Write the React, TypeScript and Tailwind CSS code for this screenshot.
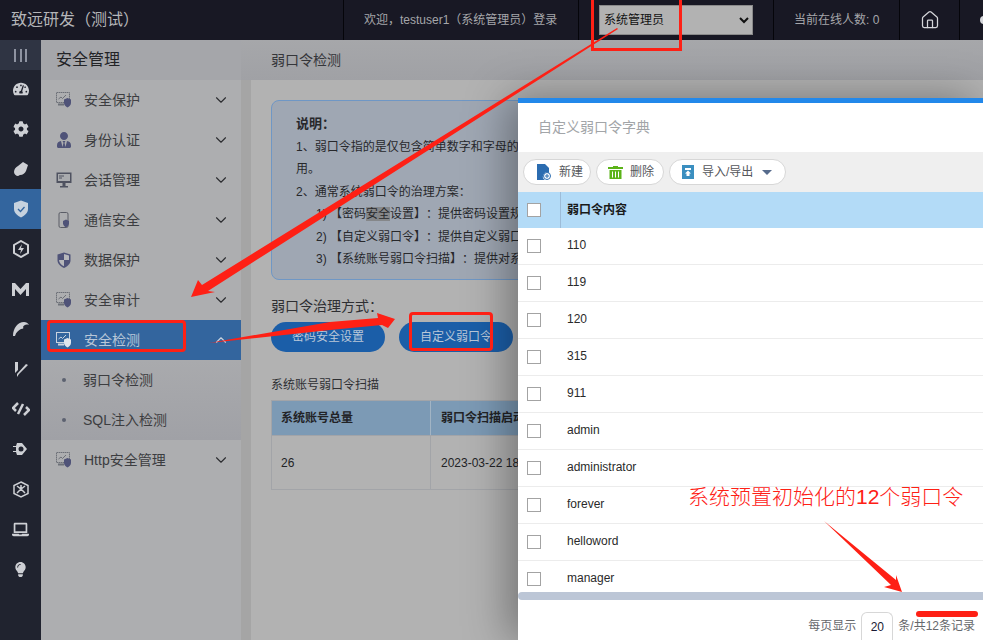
// App.tsx
import { ChevronDown, ChevronUp, Home } from "lucide-react";
import { FaCog, FaLaptop, FaLightbulb, FaTachometerAlt, FaUserTie } from "react-icons/fa";

const font = "font-['Liberation_Sans','Noto_Sans_CJK_SC',sans-serif]";

const passwords = ["110", "119", "120", "315", "911", "admin", "administrator", "forever", "helloword", "manager"];

function ScreenShield({ light = false }: { light?: boolean }) {
	const c = light ? "#c9d3df" : "#6d7178";
	return (
		<svg width="16" height="16" viewBox="0 0 16 16">
			<rect x="0.5" y="0.5" width="13" height="10" fill="none" stroke={c} strokeDasharray={light ? undefined : "1.5 0.5"} />
			<path d="M2.5 7l2.5-2 1.5 1.5L10 3" fill="none" stroke={c} />
			<rect x="2" y="11.5" width="6" height="2" fill={c} />
			<path d="M8 7.5l3.5-1.5L15 7.5v3.5c0 2-2 3.700-3.500 4.500C10 14.700 8 13 8 11z" fill={light ? "#dfe5ec" : "#4f5378"} />
		</svg>
	);
}

function Monitor() {
	return (
		<svg width="16" height="16" viewBox="0 0 16 16">
			<rect x="0.5" y="0.500" width="15" height="10.500" fill="#4f5260" />
			<rect x="2" y="2" width="12" height="7" fill="#a9abae" />
			<path d="M3 4h5M3 6h3" stroke="#4f5260" />
			<rect x="6.500" y="11" width="3" height="3" fill="#4f5260" />
			<rect x="4" y="14" width="8" height="1.500" fill="#4f5260" />
		</svg>
	);
}

function HalfShield() {
	return (
		<svg width="16" height="16" viewBox="0 0 16 16">
			<path d="M8 0.500l6.500 2v6c0 3.500-3.500 6-6.500 7.500C5 14.500 1.500 12 1.500 8.500v-6z" fill="#4f5378" />
			<path d="M8 2l5 1.500V8H8zM8 8v6.200C5.500 13 3 11 3 8z" fill="#b6b7ba" />
		</svg>
	);
}

function RailIcon({ children }: { children: React.ReactNode }) {
	return <div className="flex h-10 items-center justify-center text-[#cdcfd4]">{children}</div>;
}

function Rail() {
	return (
		<aside className="flex w-[41px] shrink-0 flex-col bg-[#20232f]">
			<div className="flex h-[30px] items-center justify-center gap-[3.5px] bg-[#2f3443]">
				<span className="h-[13px] w-0.5 bg-[#8e93a1]" />
				<span className="h-[13px] w-0.5 bg-[#8e93a1]" />
				<span className="h-[13px] w-0.5 bg-[#8e93a1]" />
			</div>
			<div className="-mt-px flex flex-col">
				<RailIcon><FaTachometerAlt size={16} /></RailIcon>
				<RailIcon><FaCog size={16} /></RailIcon>
				<RailIcon>
					<svg width="16" height="16" viewBox="0 0 16 16" fill="currentColor">
						<path d="M1 11c0-3 2-5 4-6l5-4 5 3-2 6c-1 2-3 4-6 4-1 0-1 1-2 1-2 0-4-2-4-4z" />
					</svg>
				</RailIcon>
				<div className="flex h-10 items-center justify-center bg-[#33659e]">
					<svg width="16" height="18" viewBox="0 0 16 18">
						<path d="M8 0.500l7 2.500v6c0 4-3.500 6.500-7 8.500C4.500 15.500 1 13 1 9V3z" fill="#c6d2df" />
						<path d="M5 9l2.500 2.500L11.500 7" fill="none" stroke="#33659e" strokeWidth="1.300" />
					</svg>
				</div>
				<RailIcon>
					<svg width="16" height="18" viewBox="0 0 16 18">
						<path d="M8 1l7 4v8l-7 4-7-4V5z" fill="none" stroke="currentColor" strokeWidth="2" />
						<path d="M9 4L5 10h3l-1 4 4-6H8z" fill="currentColor" />
					</svg>
				</RailIcon>
				<RailIcon>
					<svg width="17" height="13" viewBox="0 0 17 13">
						<path d="M0 13V0h3l5.500 6L14 0h3v13h-3V6l-5.500 6L3 6v7z" fill="currentColor" />
					</svg>
				</RailIcon>
				<RailIcon>
					<svg width="16" height="14" viewBox="0 0 16 14">
						<path d="M0 14C0 6 5 0 11 0c2 0 4 1 5 3-3-1-5 0-6 2 1 1 0 2-2 2-2 1-5 3-6 7z" fill="currentColor" />
					</svg>
				</RailIcon>
				<RailIcon>
					<svg width="14" height="15" viewBox="0 0 14 15">
						<path d="M1 0h3v8l-3 3zM14 3l-9 9-2 3 0-3 9-10z" fill="currentColor" />
					</svg>
				</RailIcon>
				<RailIcon>
					<svg width="18" height="14" viewBox="0 0 18 14">
						<path d="M6 1L1 6l3 3M12 13l5-5-3-3M11 2L6 12" fill="none" stroke="currentColor" strokeWidth="2.500" />
					</svg>
				</RailIcon>
				<RailIcon>
					<svg width="16" height="14" viewBox="0 0 16 14">
						<path d="M4 1h5l5 6-5 6H4l-1-3H0V9h3V5H0V4h3z" fill="currentColor" />
						<circle cx="8" cy="7" r="2.500" fill="#20232f" />
					</svg>
				</RailIcon>
				<RailIcon>
					<svg width="16" height="17" viewBox="0 0 16 17">
						<path d="M8 1l7 3.500v8L8 16l-7-3.500v-8z" fill="none" stroke="currentColor" strokeWidth="1.500" />
						<path d="M8 4v4M4 5l4 3 4-3M4 12l4-4 4 4" fill="none" stroke="currentColor" strokeWidth="1.500" />
					</svg>
				</RailIcon>
				<RailIcon><FaLaptop size={17} /></RailIcon>
				<RailIcon><FaLightbulb size={15} /></RailIcon>
			</div>
		</aside>
	);
}

function NavItem({ icon, label, open = false, active = false }: { icon: React.ReactNode; label: string; open?: boolean; active?: boolean }) {
	return (
		<div className={`flex h-10 items-center pl-[15px] pr-[11px] text-[14px] ${active ? "bg-[#33659e] text-[#b9c7d8]" : "text-[#3c3d40]"}`}>
			<span className="flex w-7 shrink-0">{icon}</span>
			<span className="flex-1">{label}</span>
			{open ? <ChevronUp size={18} strokeWidth={1.500} className="text-[#c9d3df]" /> : <ChevronDown size={18} strokeWidth={1.500} className="text-[#2c2d30]" />}
		</div>
	);
}

function SideNav() {
	return (
		<nav className="w-[200px] shrink-0 bg-[#adaeb0]">
			<div className="flex h-10 items-center bg-[#a5a6aa] pl-[15px] text-[16px] text-[#222326]">安全管理</div>
			<NavItem icon={<ScreenShield />} label="安全保护" />
			<NavItem icon={<FaUserTie size={16} color="#4f5378" />} label="身份认证" />
			<NavItem icon={<Monitor />} label="会话管理" />
			<NavItem
				icon={
					<svg width="16" height="16" viewBox="0 0 16 16">
						<rect x="3" y="0.500" width="9" height="15" rx="1.500" fill="none" stroke="#5a5d66" />
						<path d="M7 9l3-1.500L13 9v2.500c0 1.500-1.500 3-3 4-1.500-1-3-2.500-3-4z" fill="#4f5378" />
					</svg>
				}
				label="通信安全"
			/>
			<NavItem icon={<HalfShield />} label="数据保护" />
			<NavItem icon={<ScreenShield />} label="安全审计" />
			<NavItem icon={<ScreenShield light />} label="安全检测" open active />
			<div className="bg-gradient-to-b from-[#a9aaad] to-[#a0a1a6] text-[14px] text-[#3c3d40]">
				<div className="flex h-10 items-center pl-[21px]">
					<span className="mr-[17px] size-1 rounded-full bg-[#5c6170]" />
					<span>弱口令检测</span>
				</div>
				<div className="flex h-10 items-center pl-[21px]">
					<span className="mr-[17px] size-1 rounded-full bg-[#5c6170]" />
					<span>SQL注入检测</span>
				</div>
			</div>
			<NavItem icon={<ScreenShield />} label="Http安全管理" />
		</nav>
	);
}

function Main() {
	return (
		<main className="flex min-w-0 flex-1 flex-col">
			<div className="flex h-10 shrink-0 items-center bg-gradient-to-b from-[#a6a7aa] to-[#a0a1a5] pl-[30px] text-[14px] text-[#35363a]">弱口令检测</div>
			<div className="flex min-h-0 flex-1">
				<div className="w-2.5 shrink-0 bg-[#a5a5a5]" />
				<div className="min-w-0 flex-1 bg-[#b2b2b2] pl-5 pt-5">
					<div className="h-[180px] w-[712px] rounded-lg border border-[#6f97c5] bg-[#9fa7b3] pl-6 pt-3 text-[12px] leading-[22.500px] text-[#27282b] [text-spacing-trim:space-all]">
						<p className="text-[13px] font-bold">说明：</p>
						<p className="whitespace-nowrap">1、弱口令指的是仅包含简单数字和字母的</p>
						<p>用。</p>
						<p className="whitespace-nowrap">2、通常系统弱口令的治理方案：</p>
						<p className="whitespace-nowrap pl-5">
							1) 【密码<span className="bg-[#85878a]">安全</span>设置】：提供密码设置规
						</p>
						<p className="whitespace-nowrap pl-5">2) 【自定义弱口令】：提供自定义弱口</p>
						<p className="whitespace-nowrap pl-5">3) 【系统账号弱口令扫描】：提供对系</p>
					</div>
					<p className="mt-4 text-[14px] leading-5 text-[#2e2f32]">弱口令治理方式：</p>
					<div className="mt-1.5 flex gap-3.5">
						<button className="h-[30px] w-[114px] rounded-full bg-[#1b5ea8] text-[12px] text-[#b9c7d8]">密码安全设置</button>
						<button className="h-[30px] w-[114px] rounded-full bg-[#1b5ea8] text-[12px] text-[#b9c7d8]">自定义弱口令</button>
					</div>
					<p className="mt-6 text-[12px] leading-[18px] text-[#2e2f32]">系统账号弱口令扫描</p>
					<div className="mt-1.5 w-[712px] border border-[#a2a4a8] text-[12px] text-[#222326]">
						<div className="flex h-[34px] items-center bg-[#7c9ab5] font-bold">
							<span className="flex h-full w-[159px] items-center border-r border-[#a2b4c4] pl-[9px]">系统账号总量</span>
							<span className="pl-2.5">弱口令扫描启动</span>
						</div>
						<div className="flex h-[54px] items-center border-t border-[#a2a4a8]">
							<span className="flex h-full w-[159px] items-center border-r border-[#a2a4a8] pl-[9px]">26</span>
							<span className="pl-2.5">2023-03-22 18</span>
						</div>
					</div>
				</div>
			</div>
		</main>
	);
}

function ToolButton({ children, icon, className }: { children: React.ReactNode; icon: React.ReactNode; className: string }) {
	return (
		<div className={`flex h-[26px] items-center rounded-full border border-[#d7d7d7] bg-white text-[12px] text-[#55575c] ${className}`}>
			{icon}
			{children}
		</div>
	);
}

function Checkbox() {
	return <span className="size-[14px] shrink-0 border border-[#a3a3a3] bg-white" />;
}

function Dialog() {
	return (
		<section className="absolute left-[518px] top-[98px] flex h-[542px] w-[465px] flex-col border-t-[5px] border-[#2288ea] bg-white shadow-[-10px_0_40px_rgba(0,0,0,0.35)]">
			<div className="flex h-[49px] shrink-0 items-center pl-5 text-[14px] text-[#a2a5a8]">自定义弱口令字典</div>
			<div className="flex h-10 shrink-0 items-center gap-[5px] bg-[#efefef] pl-[5px]">
				<ToolButton
					className="w-[68px] pl-[13px]"
					icon={
						<svg width="14" height="16" viewBox="0 0 14 16" className="mr-2">
							<path d="M0 0h8l4 4v5a4 4 0 0 0-4 7H0z" fill="#2b6cb0" />
							<circle cx="10" cy="12" r="3.500" fill="none" stroke="#2b6cb0" />
							<path d="M8 12h4M10 10v4" stroke="#2b6cb0" />
						</svg>
					}
				>
					新建
				</ToolButton>
				<ToolButton
					className="w-[68px] pl-[11px]"
					icon={
						<svg width="15" height="14" viewBox="0 0 15 14" className="mr-[7px]">
							<path d="M5 1h5v1h5v2H0V2h5zM1.500 5h12v9h-12zM4 6.500v6h1v-6zM7 6.500v6h1v-6zM10 6.500v6h1v-6z" fill="#5bb318" fillRule="evenodd" />
						</svg>
					}
				>
					删除
				</ToolButton>
				<ToolButton
					className="w-[117px] pl-3"
					icon={
						<svg width="12" height="14" viewBox="0 0 12 14" className="mr-[8px]">
							<path d="M0 0h12v14H0z" fill="#3b8fc0" />
							<path d="M3 3h6v2H3zM6 5.500l3 3H7.500V11h-3V8.500H3z" fill="#fff" />
						</svg>
					}
				>
					导入/导出
					<svg width="10" height="5" viewBox="0 0 10 5" className="ml-[9px]">
						<path d="M0 0h10L5 5z" fill="#566b8c" />
					</svg>
				</ToolButton>
			</div>
			<div className="flex h-9 shrink-0 items-center bg-[#b3dbf7] text-[12px] font-bold text-[#1a1a1a]">
				<span className="flex h-full w-[43px] items-center border-r border-[#9dbcd8] pl-[9px]">
					<Checkbox />
				</span>
				<span className="pl-1.5">弱口令内容</span>
			</div>
			<div className="min-h-0 flex-1 overflow-hidden">
				{passwords.map((pw) => (
					<div key={pw} className="flex h-[37px] items-center border-b border-[#ececec] text-[12px] text-[#2a2a2a]">
						<span className="flex w-[43px] justify-center pr-[11px]">
							<Checkbox />
						</span>
						<span className="pb-0.5 pl-1.5">{pw}</span>
					</div>
				))}
			</div>
			<div className="h-2 shrink-0 rounded-l-full bg-[#bcc6d6]" />
			<div className="flex h-10 shrink-0 items-end justify-end pr-2 text-[12px] text-[#66686c]">
				<span className="mb-[5px]">每页显示</span>
				<span className="ml-[5px] flex h-7 w-8 items-center justify-center rounded-t-md border border-b-0 border-[#d7d7d7] text-[#1a1a33]">20</span>
				<span className="mb-[5px] ml-[5px]">条/共12条记录</span>
			</div>
		</section>
	);
}

function Annotations() {
	return (
		<>
			<svg className="pointer-events-none absolute inset-0" width="983" height="640" viewBox="0 0 983 640">
				<polygon points="191,297 198,280 202,285 617,28 618,29 208,291 215,292" fill="#fe2015" />
				<polygon points="209,343 330,322 378,318 377,313 395,319 388,328 382,325 330,330" fill="#fe2015" />
				<polygon points="824,521 896,580 896,575 902,592 884,587 891,585" fill="#fe2015" />
			</svg>
			<div className="absolute left-[591px] top-[-4px] h-[55px] w-[91px] border-[3px] border-[#fe2015]" />
			<div className="absolute left-[47px] top-[320px] h-[32px] w-[139px] rounded-sm border-[3px] border-[#fe2015]" />
			<div className="absolute left-[409px] top-[312px] h-[39px] w-[84px] rounded-sm border-[3px] border-[#fe2015]" />
			<div className="absolute left-[916px] top-[611px] h-[6px] w-[62px] rounded-full bg-[#fe2015]" />
			<span className="absolute left-[688px] top-[483px] text-[21px] font-light leading-7 text-[#fe2015]">系统预置初始化的12个弱口令</span>
		</>
	);
}

export default function App() {
	return (
		<div className={`relative flex h-[640px] w-[983px] flex-col overflow-hidden ${font}`}>
			<header className="flex h-10 shrink-0 items-center bg-[#181824] text-[12px] text-[#a5a6aa]">
				<div className="w-[343px] shrink-0 pl-[11px] text-[16px] text-[#b4b5b8]">致远研发（测试）</div>
				<div className="flex h-full w-[235px] shrink-0 items-center border-l border-[#05050a] pl-5">欢迎，testuser1（系统管理员）登录</div>
				<div className="flex h-full w-[195px] shrink-0 items-center border-l border-[#05050a] pl-5">
					<select defaultValue="admin" className="h-[30px] w-[154px] border border-[#8a8a8a] bg-[#b2b2b2] text-[12px] text-[#111]">
						<option value="admin">系统管理员</option>
					</select>
				</div>
				<div className="flex h-full w-[126px] shrink-0 items-center border-l border-[#05050a] pl-5 text-[#a5a6aa]">当前在线人数: 0</div>
				<div className="flex h-full w-[60px] shrink-0 items-center justify-center border-l border-[#05050a]">
					<Home size={20} strokeWidth={1.500} className="text-[#d5d6da]" />
				</div>
				<div className="flex h-full flex-1 items-center border-l border-[#05050a] pl-5">
					<span className="size-2 rounded-full bg-[#d5d6da]" />
				</div>
			</header>
			<div className="flex min-h-0 flex-1">
				<Rail />
				<SideNav />
				<Main />
			</div>
			<Dialog />
			<Annotations />
		</div>
	);
}
